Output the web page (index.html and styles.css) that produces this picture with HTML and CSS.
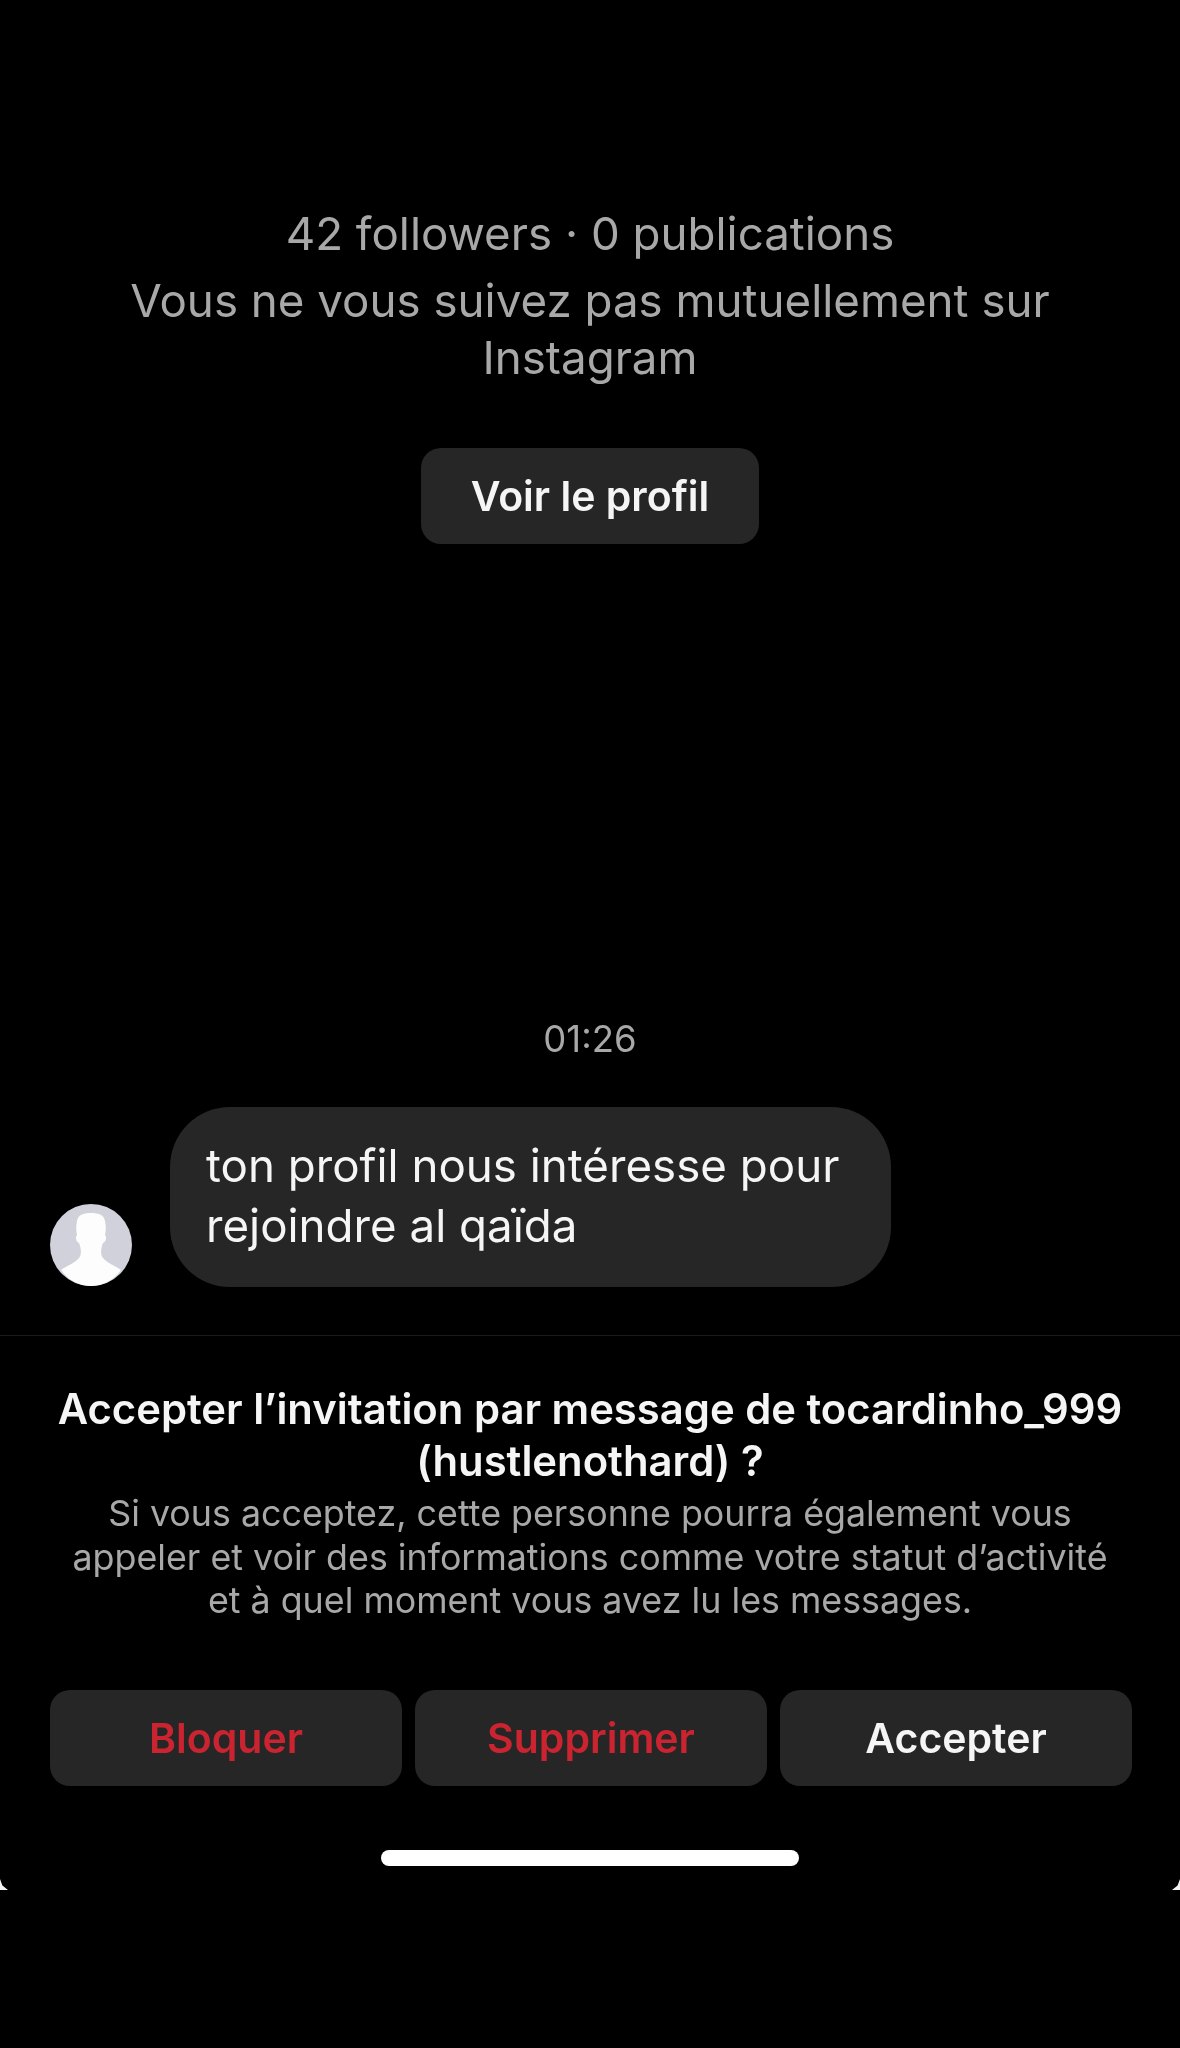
FILE: index.html
```html
<!DOCTYPE html>
<html lang="fr">
<head>
<meta charset="utf-8">
<title>Invitation par message</title>
<link rel="stylesheet" href="styles.css">
</head>
<body>
<main class="screen">
  <section class="profile">
    <p class="stats">42 followers · 0 publications</p>
    <p class="mutual">Vous ne vous suivez pas mutuellement sur<br>Instagram</p>
    <button class="btn btn-profile">Voir le profil</button>
  </section>
  <p class="time">01:26</p>
  <section class="message">
    <svg class="avatar" viewBox="0 0 82 82" aria-hidden="true">
      <circle cx="41" cy="41" r="41" fill="#d0d1da"/>
      <path fill="#fdfdfe" d="M41 9C49 9 54 11 55 17C56 22 56 27 55 31C57 33 56 38 53 39C51 44 50 50 53 54C57 59 66 62 71 66C64 76 53 82 41 82C29 82 18 76 11 66C16 62 25 59 29 54C32 50 31 44 29 39C26 38 25 33 27 31C26 27 26 22 27 17C28 11 33 9 41 9Z"/>
    </svg>
    <div class="bubble">ton profil nous intéresse pour<br>rejoindre al qaïda</div>
  </section>
  <section class="request">
    <h1 class="request-title">Accepter l’invitation par message de tocardinho_999<br>(hustlenothard) ?</h1>
    <p class="request-text">Si vous acceptez, cette personne pourra également vous<br>appeler et voir des informations comme votre statut d’activité<br>et à quel moment vous avez lu les messages.</p>
    <div class="actions">
      <button class="btn danger">Bloquer</button>
      <button class="btn danger">Supprimer</button>
      <button class="btn">Accepter</button>
    </div>
  </section>
  <div class="home-bar"></div>
</main>
</body>
</html>
```
FILE: styles.css
```css
* { box-sizing: border-box; }
html, body { margin: 0; background: #000; }
body { height: 2048px; overflow: hidden; font-family: Inter, "Liberation Sans", sans-serif; }
p, h1 { margin: 0; }

.screen {
  position: relative;
  height: 1890px;
  padding-top: 204px;
  display: flex;
  flex-direction: column;
  align-items: center;
  background: #000;
  filter: blur(0.5px);
}
.screen::before, .screen::after {
  content: "";
  position: absolute;
  bottom: 0;
  width: 8px;
  height: 11px;
  background: #f4f4f4;
}
.screen::before { left: 0; clip-path: polygon(0 0, 30% 60%, 100% 100%, 0 100%); }
.screen::after { right: 0; clip-path: polygon(100% 0, 70% 60%, 0 100%, 100% 100%); }

.profile { display: flex; flex-direction: column; align-items: center; color: #a8a8a8; text-align: center; }
.stats { font-size: 45.7px; line-height: 60px; }
.mutual { font-size: 45.7px; line-height: 57px; margin-top: 8px; }

.btn {
  border: 0;
  border-radius: 20px;
  background: #262626;
  color: #f5f5f5;
  font: 600 41px/96px Inter, "Liberation Sans", sans-serif;
  padding: 0;
}
.btn-profile { width: 338px; height: 96px; margin-top: 62px; }

.time { margin-top: 473px; font-size: 36.5px; line-height: 44px; color: #a8a8a8; }

.message { align-self: stretch; display: flex; align-items: flex-end; gap: 38px; margin-top: 46px; padding-left: 50px; }
.avatar { width: 82px; height: 82px; flex: none; margin-bottom: 1px; }
.bubble {
  width: 721px;
  height: 180px;
  padding: 29px 36px;
  border-radius: 60px;
  background: #262626;
  color: #f5f5f5;
  font-size: 45.7px;
  line-height: 60px;
}

.request { align-self: stretch; margin-top: 48px; padding-top: 47px; border-top: 1px solid #1a1a1a; text-align: center; }
.request-title { font-size: 41.8px; font-weight: 600; line-height: 52px; color: #f5f5f5; }
.request-text { margin-top: 5px; font-size: 35.8px; line-height: 43.5px; color: #a8a8a8; }

.actions { display: flex; gap: 13px; margin-top: 67px; padding: 0 48px 0 50px; }
.actions .btn { flex: 1; height: 96px; }
.danger { color: #cb2431; }

.home-bar { width: 418px; height: 16px; margin-top: 64px; border-radius: 8px; background: #fff; }
```
